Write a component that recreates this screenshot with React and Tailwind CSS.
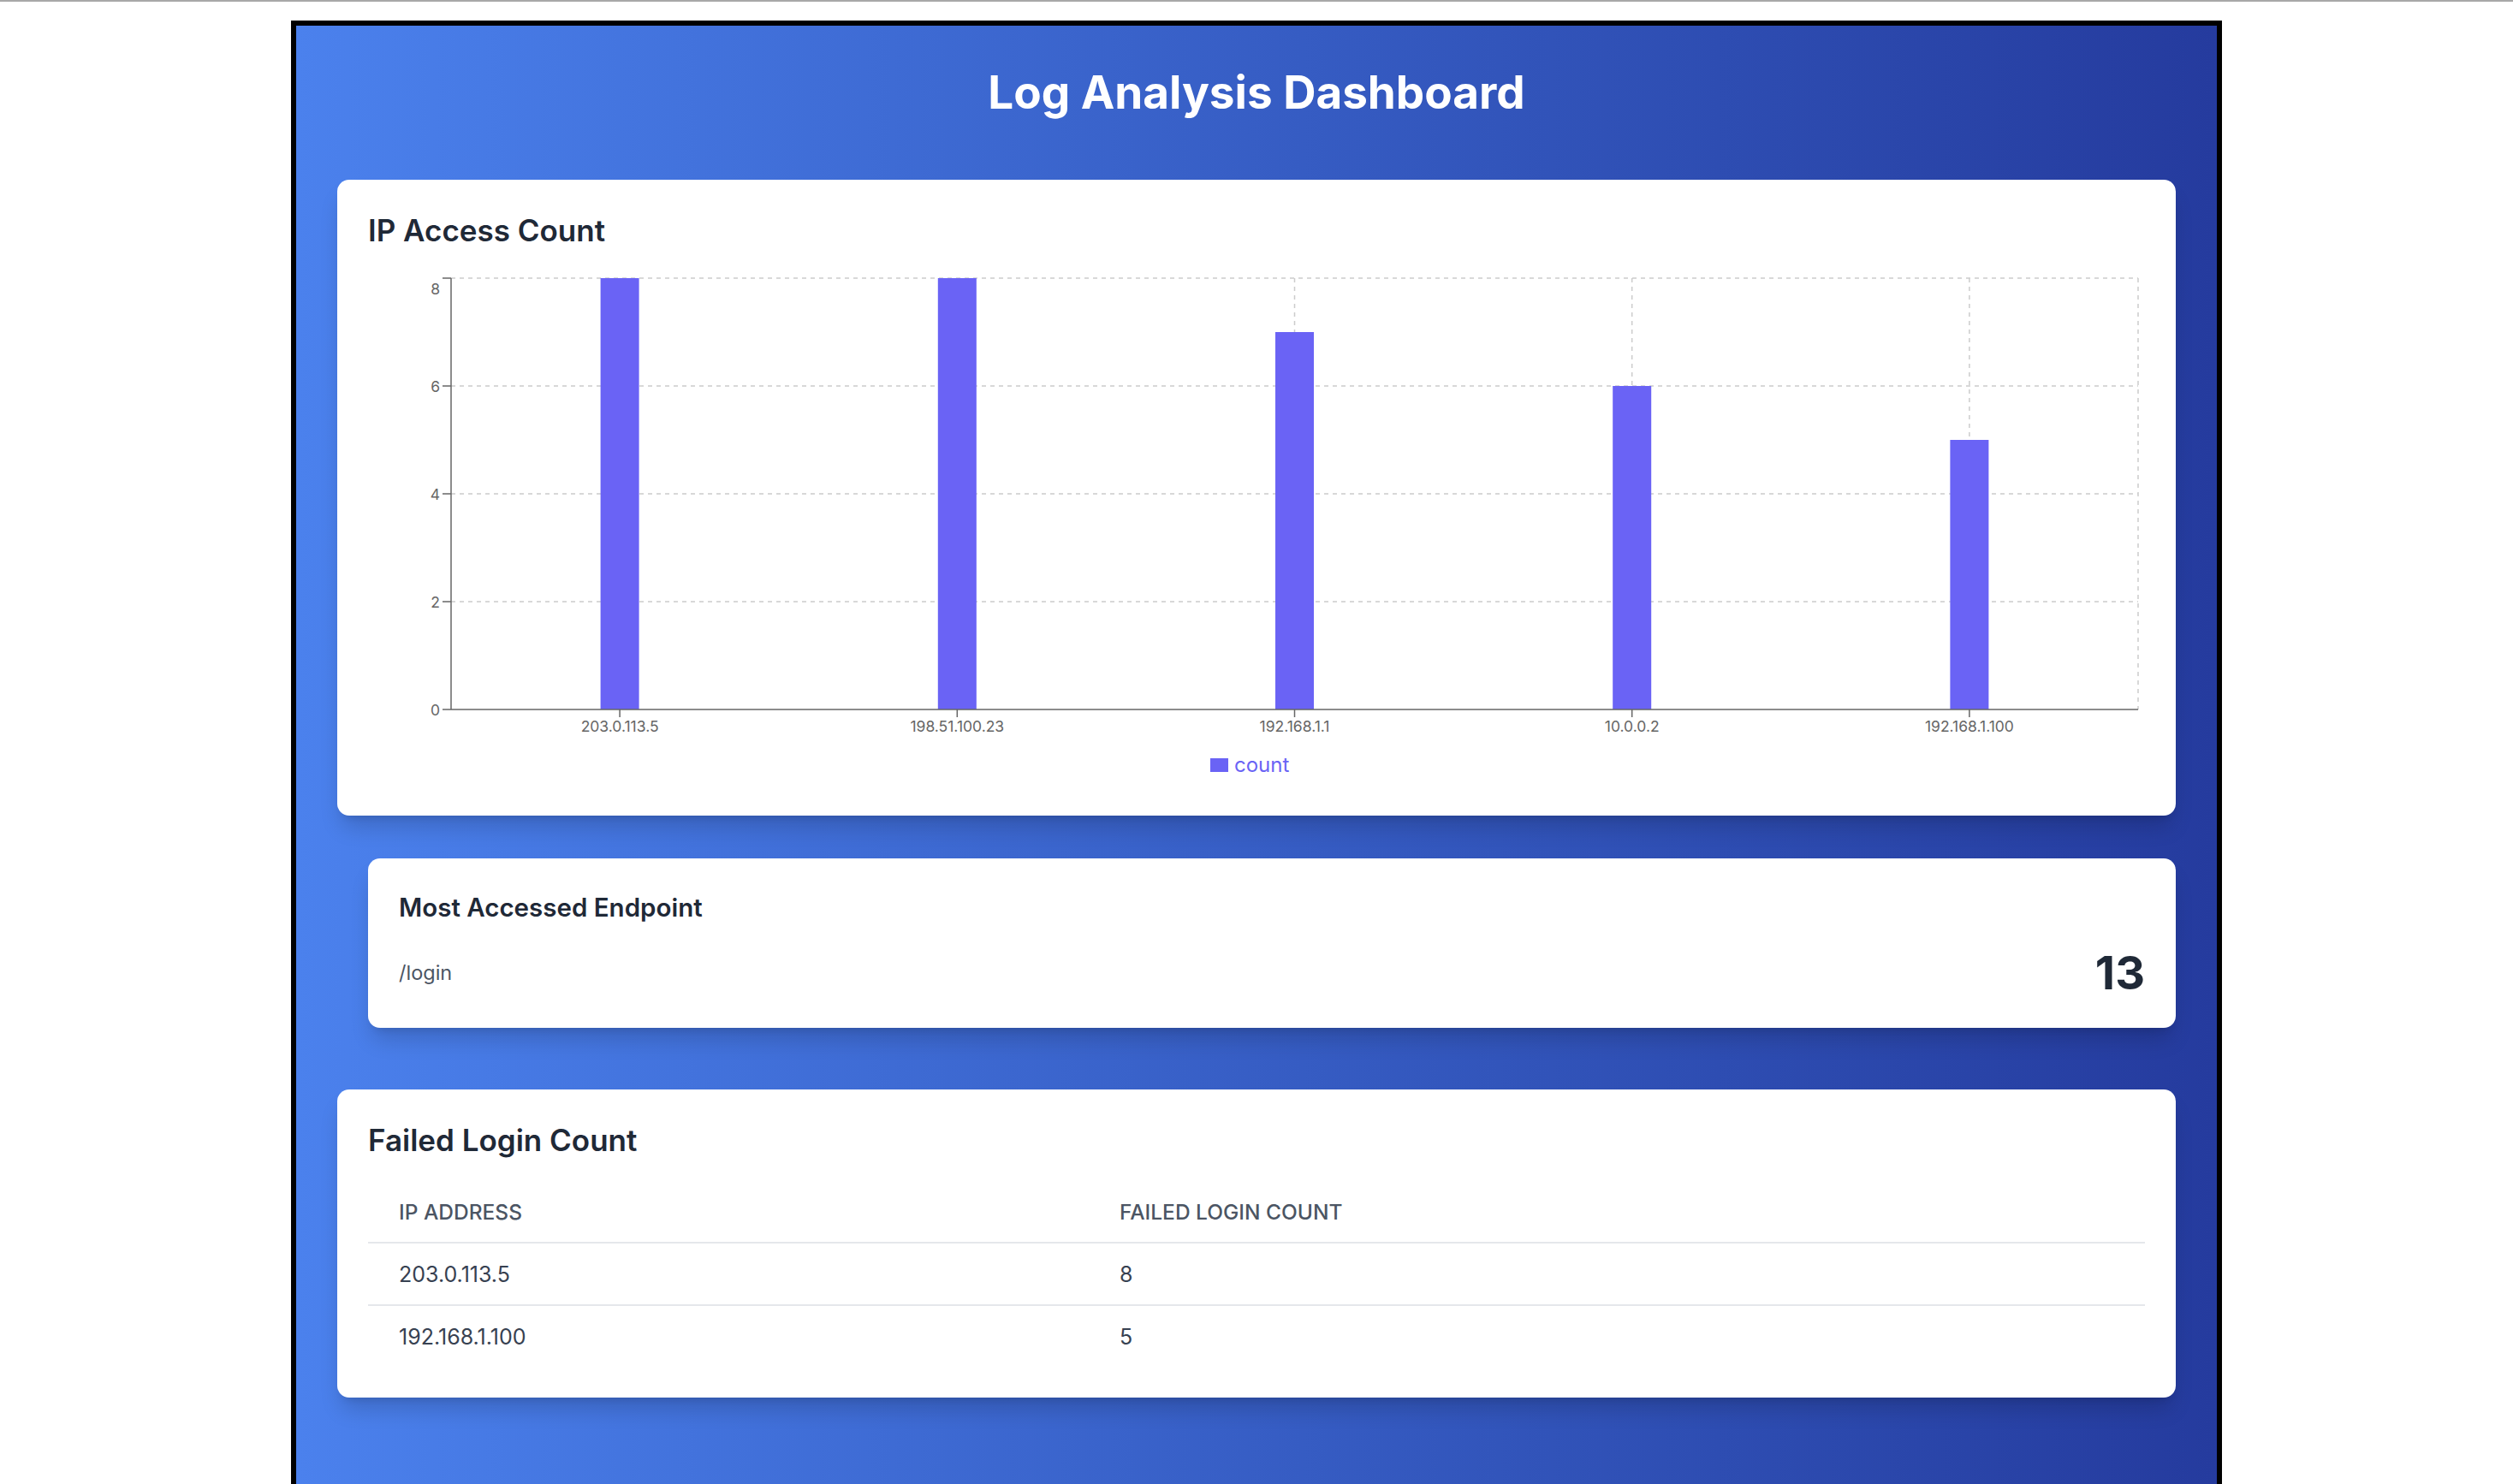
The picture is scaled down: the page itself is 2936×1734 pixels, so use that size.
const ipData = [
  { ip: '203.0.113.5', count: 8 },
  { ip: '198.51.100.23', count: 8 },
  { ip: '192.168.1.1', count: 7 },
  { ip: '10.0.0.2', count: 6 },
  { ip: '192.168.1.100', count: 5 },
];

const failedLogins = [
  { ip: '203.0.113.5', count: 8 },
  { ip: '192.168.1.100', count: 5 },
];

const BAR = '#6a63f5';

// Chart geometry (svg coordinates)
const W = 2076;
const H = 625;
const left = 97;
const right = 2068;
const top = 33;
const bottom = 537;
const maxY = 8;
const unit = (bottom - top) / maxY;
const band = (right - left) / ipData.length;
const barW = 45;

const IpChart = () => {
  const yTicks = [0, 2, 4, 6, 8];
  const centers = ipData.map((_, i) => left + band / 2 + i * band);

  return (
    <svg viewBox={`0 0 ${W} ${H}`} className="w-full h-[625px] block" style={{ fontFamily: 'Inter, sans-serif' }}>
      {/* grid */}
      {yTicks.filter(t => t > 0).map(t => (
        <line key={`h-${t}`} x1={left} x2={right} y1={bottom - t * unit} y2={bottom - t * unit} stroke="#ccc" strokeWidth="1.5" strokeDasharray="5 5" />
      ))}
      {[...centers, right].map((x, i) => (
        <line key={`v-${i}`} x1={x} x2={x} y1={top} y2={bottom} stroke="#ccc" strokeWidth="1.5" strokeDasharray="5 5" />
      ))}

      {/* bars */}
      {ipData.map((d, i) => (
        <rect key={d.ip} x={centers[i] - barW / 2} y={bottom - d.count * unit} width={barW} height={d.count * unit} fill={BAR} />
      ))}

      {/* y axis */}
      <line x1={left} x2={left} y1={top} y2={bottom} stroke="#666" strokeWidth="1.5" />
      {yTicks.map(t => {
        const y = bottom - t * unit;
        return (
          <g key={`yt-${t}`}>
            <line x1={left - 10} x2={left} y1={y} y2={y} stroke="#666" strokeWidth="1.5" />
            <text x={left - 13} y={t === maxY ? y + 12 : y} textAnchor="end" dominantBaseline="central" fill="#666" fontSize="17.5">{t}</text>
          </g>
        );
      })}

      {/* x axis */}
      <line x1={left} x2={right} y1={bottom} y2={bottom} stroke="#666" strokeWidth="1.5" />
      {ipData.map((d, i) => (
        <g key={`xt-${d.ip}`}>
          <line x1={centers[i]} x2={centers[i]} y1={bottom} y2={bottom + 9} stroke="#666" strokeWidth="1.5" />
          <text x={centers[i]} y={bottom + 19} textAnchor="middle" dominantBaseline="central" fill="#666" fontSize="17.5">{d.ip}</text>
        </g>
      ))}

      {/* legend */}
      <rect x="984" y="594" width="21" height="16" fill={BAR} />
      <text x="1012" y="601" dominantBaseline="central" fill={BAR} fontSize="24">count</text>
    </svg>
  );
};

const Card = ({ className = '', children }) => (
  <div className={`bg-white rounded-[14px] p-9 shadow-[0_18px_26px_-5px_rgba(0,0,0,0.16),0_7px_10px_-6px_rgba(0,0,0,0.12)] ${className}`}>
    {children}
  </div>
);

export default function App() {
  return (
    <div className="min-h-screen bg-white border-t-2 border-[#a8a8a8] font-['Inter',sans-serif]">
      <div className="mx-auto mt-[22px] w-[2256px] border-[6px] border-black bg-linear-to-r from-[#4b81ed] to-[#253b9e] px-12 pt-12 pb-[200px]">
        <h1 className="text-center text-white font-bold text-[53px] leading-[60px] mb-[72px]">
          Log Analysis Dashboard
        </h1>

        {/* IP access */}
        <Card>
          <h2 className="text-[35px] leading-[46px] font-semibold text-[#1f2937]">IP Access Count</h2>
          <IpChart />
        </Card>

        {/* Endpoint */}
        <Card className="ml-9 mt-[50px]">
          <h2 className="text-[29.5px] leading-[42px] font-semibold text-[#1f2937]">Most Accessed Endpoint</h2>
          <div className="mt-7 flex items-center justify-between h-14">
            <span className="text-[23.5px] text-[#4b5563]">/login</span>
            <span className="text-[54px] leading-[56px] font-bold text-[#1f2937]">13</span>
          </div>
        </Card>

        {/* Failed logins */}
        <Card className="mt-[72px]">
          <h2 className="text-[35px] leading-[46px] font-semibold text-[#1f2937] mb-[25px]">Failed Login Count</h2>
          <table className="w-full text-left border-collapse">
            <thead>
              <tr className="border-b-2 border-[#e5e7eb]">
                <th className="w-[842px] px-9 py-[17.5px] text-[24.5px] leading-9 font-medium uppercase text-[#4b5563]">IP Address</th>
                <th className="px-9 py-[17.5px] text-[24.5px] leading-9 font-medium uppercase text-[#4b5563]">Failed Login Count</th>
              </tr>
            </thead>
            <tbody>
              {failedLogins.map((row, i) => (
                <tr key={row.ip} className={i < failedLogins.length - 1 ? 'border-b-2 border-[#e5e7eb]' : ''}>
                  <td className="px-9 py-[17.5px] text-[25px] leading-9 text-[#374151]">{row.ip}</td>
                  <td className="px-9 py-[17.5px] text-[25px] leading-9 text-[#374151]">{row.count}</td>
                </tr>
              ))}
            </tbody>
          </table>
        </Card>
      </div>
    </div>
  );
}
